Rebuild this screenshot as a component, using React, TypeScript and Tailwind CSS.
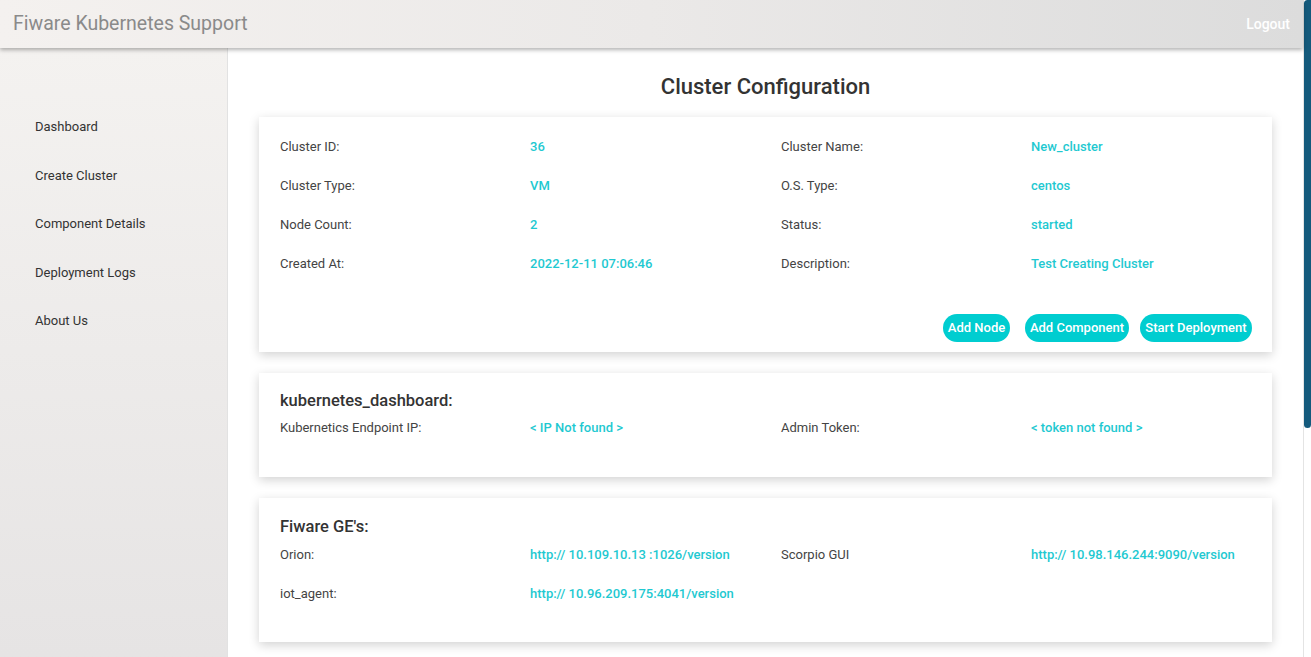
const navItems = ["Dashboard", "Create Cluster", "Component Details", "Deployment Logs", "About Us"];

const clusterRows = [
  ["Cluster ID:", "36", "Cluster Name:", "New_cluster"],
  ["Cluster Type:", "VM", "O.S. Type:", "centos"],
  ["Node Count:", "2", "Status:", "started"],
  ["Created At:", "2022-12-11 07:06:46", "Description:", "Test Creating Cluster"],
];

const buttons = [
  { label: "Add Node", cls: "w-[67px]" },
  { label: "Add Component", cls: "w-[104px] ml-[15px]" },
  { label: "Start Deployment", cls: "w-[112px] ml-[11px]" },
];

const Row = ({ cells }: { cells: string[] }) => (
  <div className="grid grid-cols-[250px_251px_250px_1fr] h-[39px] items-center text-[13px]">
    {cells.map((c, i) => (
      <span key={i} className={i % 2 === 0 ? "text-[#444]" : "text-[#1fc9d1] font-medium"}>
        {c}
      </span>
    ))}
  </div>
);

const Card = ({ children, className }: { children: React.ReactNode; className?: string }) => (
  <div className={"bg-white shadow-[0_3px_10px_rgba(0,0,0,0.18)] px-[21px] " + (className ?? "")}>{children}</div>
);

export default function App() {
  return (
    <div className="flex h-[657px] w-full overflow-hidden bg-white font-['Roboto',sans-serif]">
      <div className="flex flex-col flex-1 min-w-0">
        <header className="relative z-20 h-[48px] shrink-0 flex items-center justify-between px-[13px] bg-gradient-to-r from-[#f4f1ef] via-[#ebe9e8] to-[#dcdcdc] shadow-[0_2px_4px_rgba(0,0,0,0.3)]">
          <span className="text-[19.5px] text-[#8a8a8a] leading-[24px]">Fiware Kubernetes Support</span>
          <span className="text-[14px] font-medium text-white">Logout</span>
        </header>
        <div className="flex flex-1 min-h-0">
          <aside className="w-[228px] shrink-0 bg-gradient-to-b from-[#f4f2f0] to-[#e6e4e4] border-r border-[#e2e2e2] pt-[69px] pl-[35px]">
            {navItems.map((n) => (
              <div key={n} className="h-[48.5px] text-[13px] text-[#333]">
                {n}
              </div>
            ))}
          </aside>
          <main className="flex-1 px-[31px] pt-[25px]">
            <h1 className="text-center text-[22px] font-medium text-[#333] leading-[28px] mb-[16px]">
              Cluster Configuration
            </h1>
            <Card className="pt-[10px] pb-[10px]">
              {clusterRows.map((r) => (
                <Row key={r[0]} cells={r} />
              ))}
              <div className="flex justify-end mt-[31px] -mr-[1px]">
                {buttons.map((b) => (
                  <button
                    key={b.label}
                    className={"h-[28px] rounded-full bg-[#00cdd0] text-white text-[13px] font-medium whitespace-nowrap " + b.cls}
                  >
                    {b.label}
                  </button>
                ))}
              </div>
            </Card>
            <Card className="mt-[21px] pt-[16px] h-[104px]">
              <h2 className="text-[16.5px] font-medium text-[#333] leading-[24px]">kubernetes_dashboard:</h2>
              <div className="grid grid-cols-[250px_251px_250px_1fr] h-[20px] items-center text-[13px] mt-[5px]">
                <span className="text-[#444]">Kubernetics Endpoint IP:</span>
                <span className="text-[#1fc9d1] font-medium">&lt; IP Not found &gt;</span>
                <span className="text-[#444]">Admin Token:</span>
                <span className="text-[#1fc9d1] font-medium">&lt; token not found &gt;</span>
              </div>
            </Card>
            <Card className="mt-[21px] pt-[17px] h-[144px]">
              <h2 className="text-[16.5px] font-medium text-[#333] leading-[24px]">Fiware GE's:</h2>
              <div className="grid grid-cols-[250px_251px_250px_1fr] h-[20px] items-center text-[13px] mt-[6px]">
                <span className="text-[#444]">Orion:</span>
                <span className="text-[#1fc9d1] font-medium">http:// 10.109.10.13 :1026/version</span>
                <span className="text-[#444]">Scorpio GUI</span>
                <span className="text-[#1fc9d1] font-medium">http:// 10.98.146.244:9090/version</span>
              </div>
              <div className="grid grid-cols-[250px_251px_250px_1fr] h-[20px] items-center text-[13px] mt-[19px]">
                <span className="text-[#444]">iot_agent:</span>
                <span className="text-[#1fc9d1] font-medium">http:// 10.96.209.175:4041/version</span>
              </div>
            </Card>
          </main>
        </div>
      </div>
      <div className="w-[8px] shrink-0 flex flex-col border-l border-[#e4e4e4] bg-white">
        <div className="h-[428px] bg-[#145a7c] rounded-b-[4px] rounded-tl-[4px]" />
      </div>
    </div>
  );
}
